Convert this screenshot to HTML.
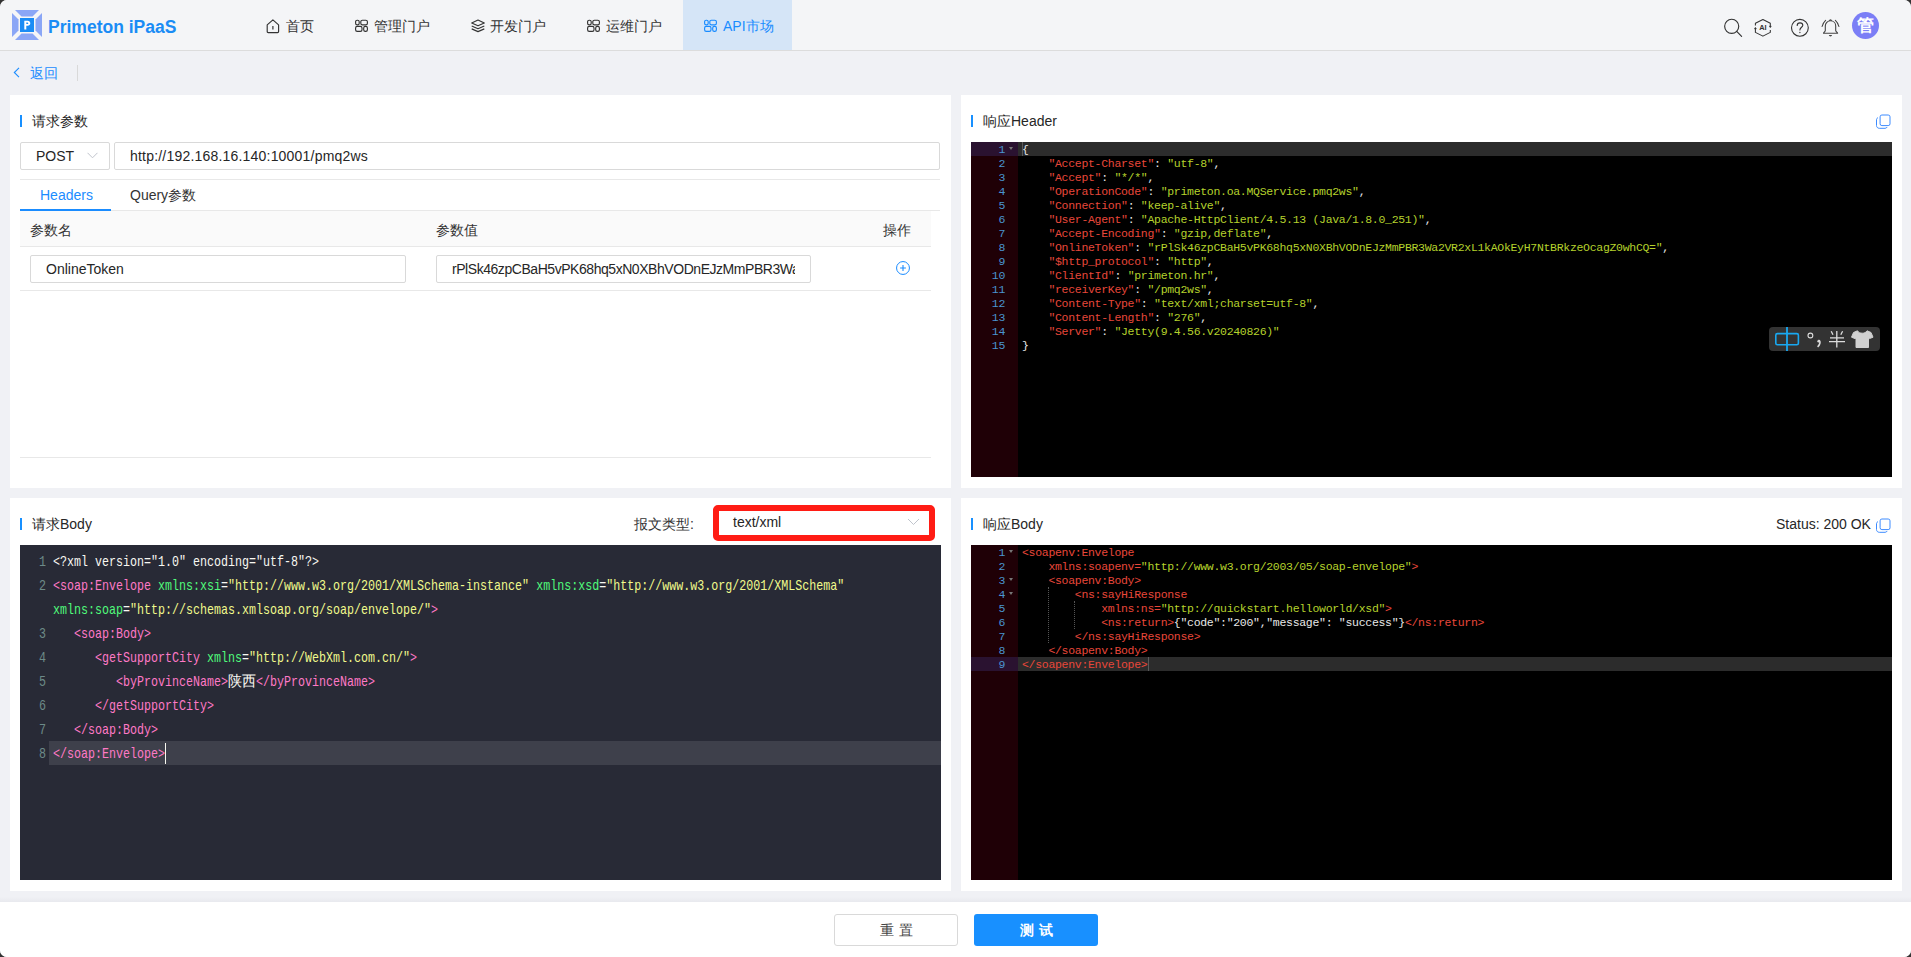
<!DOCTYPE html><html><head><meta charset="utf-8"><style>
*{box-sizing:border-box;margin:0;padding:0}
html,body{width:1911px;height:957px;overflow:hidden;background:#333}
body{font-family:"Liberation Sans",sans-serif;position:relative;color:#262626}
.page{position:absolute;left:0;top:0;width:1911px;height:957px;background:#f0f1f5;border-radius:7px;overflow:hidden}
.abs{position:absolute}
.hdr{position:absolute;left:0;top:0;width:1911px;height:51px;background:#f4f5f7;border-bottom:1px solid #dcdcdc}
.nav{position:absolute;top:0;height:50px;line-height:52px;font-size:14px;color:#333;white-space:nowrap}
.ico svg{display:block}
.panel{position:absolute;background:#fff}
.ttl{position:absolute;font-size:14px;color:#262626;line-height:16px;white-space:nowrap}
.bar{position:absolute;width:2px;height:12px;background:#1890ff}
.inp{position:absolute;border:1px solid #d9d9d9;border-radius:2px;background:#fff;font-size:14px;color:#262626;white-space:nowrap;overflow:hidden}
.mono1{font-family:"Liberation Mono",monospace}
.cm{position:absolute;background:#282a36;overflow:hidden}
.cm .ln{position:absolute;left:0;width:26px;text-align:right;color:#6d8a88;font-family:"Liberation Mono",monospace;font-size:15px;transform:scaleX(0.7778);transform-origin:100% 0}
.cm .row{position:absolute;left:33px;white-space:pre;color:#f8f8f2;font-family:"Liberation Mono",monospace;font-size:15px;height:24px;line-height:24px;transform:scaleX(0.7778);transform-origin:0 0}
.cm .zh{display:inline-block;width:36px;font-size:15px;transform:scaleX(1.2);transform-origin:0 50%;vertical-align:top}
.t{color:#ff79c6}.a{color:#50fa7b}.s{color:#f1fa8c}
.ace{position:absolute;background:#000;overflow:hidden}
.ace .gut{position:absolute;left:0;top:0;bottom:0;width:47px;background:#1f0006}
.ace .ln{position:absolute;left:0;width:34px;text-align:right;color:#4a95cf;font-family:"Liberation Mono",monospace;font-size:11.5px;letter-spacing:-0.3px;height:14px;line-height:14px}
.ace .row{position:absolute;left:51px;white-space:pre;color:#e8e8e8;font-family:"Liberation Mono",monospace;font-size:11.5px;letter-spacing:-0.3px;height:14px;line-height:14px}
.k{color:#e8473a}.v{color:#b5d22c}
.fold{position:absolute;left:38px;width:0;height:0;border-left:2.5px solid transparent;border-right:2.5px solid transparent;border-top:3.5px solid #777}
</style></head><body><div class="page">
<div class="hdr"></div>
<svg class="abs" style="left:12px;top:10px" width="30" height="30" viewBox="0 0 30 30">
<path d="M3 0H27L20.5 6.5H9.5Z" fill="#8aa6f6"/>
<path d="M3 30H27L20.5 23.5H9.5Z" fill="#8aa6f6"/>
<path d="M0 3V27L6.5 20.5V9.5Z" fill="#8aa6f6"/>
<path d="M30 3V27L23.5 20.5V9.5Z" fill="#8aa6f6"/>
<rect x="8" y="8" width="14" height="14" fill="#1a8cf5"/>
<path d="M12.3 19.5V10.8H15.6C17.4 10.8 18.3 11.7 18.3 13.2C18.3 14.7 17.3 15.7 15.6 15.7H14.3V19.5Z M14.3 12.4V14.1H15.3C15.9 14.1 16.3 13.8 16.3 13.25C16.3 12.7 15.9 12.4 15.3 12.4Z" fill="#fff"/>
</svg>
<div class="abs" style="left:48px;top:17px;font-size:17.5px;font-weight:bold;color:#1a8cf5;line-height:20px;white-space:nowrap">Primeton iPaaS</div>
<div class="abs" style="left:683px;top:0;width:109px;height:50px;background:#d5e5f7"></div>
<div class="abs ico" style="left:266px;top:19px;width:14px;height:14px"><svg width="14" height="15" viewBox="0 0 14 15" fill="none" stroke="#333" stroke-width="1.15"><path d="M1.2 5.9L6.9 0.9L12.6 5.9V12.6C12.6 13.2 12.2 13.6 11.6 13.6H2.2C1.6 13.6 1.2 13.2 1.2 12.6Z" stroke-linejoin="round"/><path d="M6.9 7V10.6" stroke-width="1.2"/></svg></div>
<div class="nav" style="left:286px;color:#333">首页</div>
<div class="abs ico" style="left:355px;top:19px;width:14px;height:14px"><svg width="14" height="14" viewBox="0 0 14 14" fill="none" stroke="#333" stroke-width="1.15"><rect x="0.6" y="1.2" width="3.6" height="4.6" rx="1.6"/><rect x="5.8" y="1.2" width="6.6" height="4.6" rx="1.6"/><rect x="0.6" y="7.3" width="6.4" height="5" rx="1.6"/><rect x="8.7" y="7.3" width="3.7" height="5" rx="1.6"/></svg></div>
<div class="nav" style="left:374px;color:#333">管理门户</div>
<div class="abs ico" style="left:471px;top:19px;width:14px;height:14px"><svg width="14" height="14" viewBox="0 0 14 14" fill="none" stroke="#333" stroke-width="1.15"><path d="M7 1.1L13.3 4L7 6.8L0.7 4Z" stroke-linejoin="round"/><path d="M0.7 7L7 9.7L13.3 7" stroke-linejoin="round"/><path d="M0.7 9.9L7 12.6L13.3 9.9" stroke-linejoin="round"/></svg></div>
<div class="nav" style="left:490px;color:#333">开发门户</div>
<div class="abs ico" style="left:587px;top:19px;width:14px;height:14px"><svg width="14" height="14" viewBox="0 0 14 14" fill="none" stroke="#333" stroke-width="1.15"><rect x="0.6" y="1.2" width="3.6" height="4.6" rx="1.6"/><rect x="5.8" y="1.2" width="6.6" height="4.6" rx="1.6"/><rect x="0.6" y="7.3" width="6.4" height="5" rx="1.6"/><rect x="8.7" y="7.3" width="3.7" height="5" rx="1.6"/></svg></div>
<div class="nav" style="left:606px;color:#333">运维门户</div>
<div class="abs ico" style="left:704px;top:19px;width:14px;height:14px"><svg width="14" height="14" viewBox="0 0 14 14" fill="none" stroke="#1a8cff" stroke-width="1.15"><rect x="0.6" y="1.2" width="3.6" height="4.6" rx="1.6"/><rect x="5.8" y="1.2" width="6.6" height="4.6" rx="1.6"/><rect x="0.6" y="7.3" width="6.4" height="5" rx="1.6"/><rect x="8.7" y="7.3" width="3.7" height="5" rx="1.6"/></svg></div>
<div class="nav" style="left:723px;color:#1a8cff">API市场</div>
<svg class="abs" style="left:1722px;top:17px" width="22" height="22" viewBox="0 0 22 22" fill="none" stroke="#333" stroke-width="1.15">
<circle cx="9.7" cy="9.3" r="7.05"/><path d="M14.7 14.4L19.6 19.4" stroke-linecap="round"/></svg>
<svg class="abs" style="left:1753px;top:18px" width="20" height="20" viewBox="0 0 20 20" fill="none" stroke="#333" stroke-width="1.05">
<path d="M17.3 8.3V5.2L9.9 1.55L2.4 5.2V7.5" stroke-linejoin="round"/><path d="M2.4 10.7V14.4L9.9 18.1L17.3 14.4V12.1" stroke-linejoin="round"/>
<path d="M16.3 8.1L17.3 9.7L18.3 8.1Z" fill="#333" stroke-width="0.5"/><path d="M1.4 10.9L2.4 9.3L3.4 10.9Z" fill="#333" stroke-width="0.5"/>
<text x="9.9" y="12.1" font-family="Liberation Sans" font-size="7.4" font-weight="bold" fill="#333" stroke="none" text-anchor="middle">AI</text></svg>
<svg class="abs" style="left:1790px;top:18px" width="20" height="20" viewBox="0 0 20 20" fill="none" stroke="#333" stroke-width="1.1">
<circle cx="9.9" cy="9.8" r="8.4"/><path d="M7.2 7.4C7.2 5.9 8.4 4.9 10 4.9C11.6 4.9 12.8 5.9 12.8 7.3C12.8 9.1 9.9 9.6 9.9 12" stroke-linecap="round"/><circle cx="9.9" cy="14.5" r="0.65" fill="#333" stroke="none"/></svg>
<svg class="abs" style="left:1821px;top:18px" width="20" height="20" viewBox="0 0 20 20" fill="none" stroke="#444" stroke-width="1.1">
<path d="M2.5 15.2C2.5 14.4 4.3 13.6 4.3 12.4V8C4.3 5 6.6 2.8 9.5 2.8C12.4 2.8 14.7 5 14.7 8V12.4C14.7 13.6 16.6 14.4 16.6 15.2Z" stroke-linejoin="round"/>
<path d="M8.6 2.9C8.6 1.4 10.4 1.4 10.4 2.9" />
<path d="M7.9 17H11C11 18.9 7.9 18.9 7.9 17Z" fill="#444" stroke="none"/>
<path d="M4.6 2.3C3 3.8 1.6 6 1.1 8.5M14.4 2.3C16 3.8 17.4 6 17.9 8.5" stroke-linecap="round"/></svg>
<div class="abs" style="left:1852px;top:12px;width:27px;height:27px;border-radius:50%;background:#7b7ef6;color:#fff;font-size:17px;font-weight:bold;line-height:27px;text-align:center">管</div>
<svg class="abs" style="left:13px;top:67px" width="7" height="11" viewBox="0 0 7 11" fill="none" stroke="#1a8cff" stroke-width="1.1"><path d="M6 0.8L1.3 5.5L6 10.2"/></svg>
<div class="abs" style="left:30px;top:64px;font-size:14px;line-height:18px;color:#1a8cff">返回</div>
<div class="abs" style="left:77px;top:65px;width:1px;height:16px;background:#d9d9d9"></div>
<div class="panel" style="left:10px;top:95px;width:941px;height:393px"></div>
<div class="panel" style="left:961px;top:95px;width:941px;height:393px"></div>
<div class="panel" style="left:10px;top:498px;width:941px;height:393px"></div>
<div class="panel" style="left:961px;top:498px;width:941px;height:393px"></div>
<div class="bar" style="left:20px;top:115px"></div>
<div class="ttl" style="left:32px;top:113px">请求参数</div>
<div class="bar" style="left:971px;top:115px"></div>
<div class="ttl" style="left:983px;top:113px">响应Header</div>
<div class="bar" style="left:20px;top:518px"></div>
<div class="ttl" style="left:32px;top:516px">请求Body</div>
<div class="bar" style="left:971px;top:518px"></div>
<div class="ttl" style="left:983px;top:516px">响应Body</div>
<div class="inp" style="left:20px;top:142px;width:90px;height:28px;line-height:26px;padding-left:15px">POST</div>
<svg class="abs" style="left:87px;top:152px" width="11" height="7" viewBox="0 0 11 7" fill="none" stroke="#c0c4cc" stroke-width="1"><path d="M0.5 0.8L5.5 5.8L10.5 0.8"/></svg>
<div class="inp" style="left:114px;top:142px;width:826px;height:28px;line-height:26px;padding-left:15px;letter-spacing:0.2px">http://192.168.16.140:10001/pmq2ws</div>
<div class="abs" style="left:20px;top:179px;width:920px;height:1px;background:#e8e8e8"></div>
<div class="abs" style="left:40px;top:186px;font-size:14px;line-height:18px;color:#1a8cff">Headers</div>
<div class="abs" style="left:130px;top:186px;font-size:14px;line-height:18px;color:#333">Query参数</div>
<div class="abs" style="left:20px;top:210px;width:920px;height:1px;background:#e8e8e8"></div>
<div class="abs" style="left:20px;top:209px;width:91px;height:2px;background:#1a8cff"></div>
<div class="abs" style="left:20px;top:211px;width:911px;height:36px;background:#fafafa;border-bottom:1px solid #e8e8e8"></div>
<div class="abs" style="left:30px;top:221px;font-size:14px;line-height:18px;color:#333">参数名</div>
<div class="abs" style="left:436px;top:221px;font-size:14px;line-height:18px;color:#333">参数值</div>
<div class="abs" style="left:883px;top:221px;font-size:14px;line-height:18px;color:#333">操作</div>
<div class="inp" style="left:30px;top:255px;width:376px;height:28px;line-height:26px;padding-left:15px">OnlineToken</div>
<div class="inp" style="left:436px;top:255px;width:375px;height:28px;line-height:26px;padding-left:15px;padding-right:15px;text-overflow:clip"><div style="width:343px;overflow:hidden;letter-spacing:-0.45px">rPlSk46zpCBaH5vPK68hq5xN0XBhVODnEJzMmPBR3Wa2VR2xL1kAOkEyH7NtBRkzeOcagZ0whCQ=</div></div>
<svg class="abs" style="left:895px;top:261px" width="16" height="15" viewBox="0 0 16 15" fill="none" stroke="#1a8cff" stroke-width="1"><circle cx="8" cy="7" r="6.45"/><path d="M8 4.1V9.9M5.1 7H10.9" stroke-width="1.1"/></svg>
<div class="abs" style="left:20px;top:290px;width:911px;height:1px;background:#e8e8e8"></div>
<div class="abs" style="left:20px;top:457px;width:911px;height:1px;background:#e8e8e8"></div>
<div class="abs" style="left:634px;top:515px;font-size:14px;line-height:18px;color:#333">报文类型:</div>
<div class="abs" style="left:713px;top:505px;width:222px;height:36px;border:6px solid #ff1c14;border-radius:5px;background:#fff"></div>
<div class="abs" style="left:733px;top:513px;font-size:14px;line-height:18px;color:#262626">text/xml</div>
<svg class="abs" style="left:907px;top:518px" width="13" height="8" viewBox="0 0 13 8" fill="none" stroke="#c0c4cc" stroke-width="1"><path d="M1 1L6.5 6.5L12 1"/></svg>
<div class="cm" style="left:20px;top:545px;width:921px;height:335px">
<div class="abs" style="left:29px;top:196px;width:892px;height:24px;background:#3e404b"></div>
<div class="ln" style="top:6px;height:24px;line-height:24px">1</div>
<div class="row" style="top:6px">&lt;?xml version=&quot;1.0&quot; encoding=&quot;utf-8&quot;?&gt;</div>
<div class="ln" style="top:30px;height:24px;line-height:24px">2</div>
<div class="row" style="top:30px"><span class="t">&lt;soap:Envelope</span> <span class="a">xmlns:xsi</span>=<span class="s">&quot;http://www.w3.org/2001/XMLSchema-instance&quot;</span> <span class="a">xmlns:xsd</span>=<span class="s">&quot;http://www.w3.org/2001/XMLSchema&quot;</span></div>
<div class="row" style="top:54px"><span class="a">xmlns:soap</span>=<span class="s">&quot;http://schemas.xmlsoap.org/soap/envelope/&quot;</span><span class="t">&gt;</span></div>
<div class="ln" style="top:78px;height:24px;line-height:24px">3</div>
<div class="row" style="top:78px">   <span class="t">&lt;soap:Body&gt;</span></div>
<div class="ln" style="top:102px;height:24px;line-height:24px">4</div>
<div class="row" style="top:102px">      <span class="t">&lt;getSupportCity</span> <span class="a">xmlns</span>=<span class="s">&quot;http://WebXml.com.cn/&quot;</span><span class="t">&gt;</span></div>
<div class="ln" style="top:126px;height:24px;line-height:24px">5</div>
<div class="row" style="top:126px">         <span class="t">&lt;byProvinceName&gt;</span><span class="zh">陕西</span><span class="t">&lt;/byProvinceName&gt;</span></div>
<div class="ln" style="top:150px;height:24px;line-height:24px">6</div>
<div class="row" style="top:150px">      <span class="t">&lt;/getSupportCity&gt;</span></div>
<div class="ln" style="top:174px;height:24px;line-height:24px">7</div>
<div class="row" style="top:174px">   <span class="t">&lt;/soap:Body&gt;</span></div>
<div class="ln" style="top:198px;height:24px;line-height:24px">8</div>
<div class="row" style="top:198px"><span class="t">&lt;/soap:Envelope&gt;</span></div>
<div class="abs" style="left:145px;top:198px;width:1px;height:21px;background:#f8f8f0"></div>
</div>
<div class="ace" style="left:971px;top:142px;width:921px;height:335px">
<div class="gut"></div>
<div class="abs" style="left:0;top:0px;width:47px;height:14px;background:#2a1230"></div>
<div class="abs" style="left:47px;top:0px;width:874px;height:14px;background:#2c2c2c"></div>
<div class="ln" style="top:1px">1</div>
<div class="fold" style="top:5px"></div>
<div class="row" style="top:1px">{</div>
<div class="ln" style="top:15px">2</div>
<div class="row" style="top:15px">    <span class="k">&quot;Accept-Charset&quot;</span>: <span class="v">&quot;utf-8&quot;</span>,</div>
<div class="ln" style="top:29px">3</div>
<div class="row" style="top:29px">    <span class="k">&quot;Accept&quot;</span>: <span class="v">&quot;*/*&quot;</span>,</div>
<div class="ln" style="top:43px">4</div>
<div class="row" style="top:43px">    <span class="k">&quot;OperationCode&quot;</span>: <span class="v">&quot;primeton.oa.MQService.pmq2ws&quot;</span>,</div>
<div class="ln" style="top:57px">5</div>
<div class="row" style="top:57px">    <span class="k">&quot;Connection&quot;</span>: <span class="v">&quot;keep-alive&quot;</span>,</div>
<div class="ln" style="top:71px">6</div>
<div class="row" style="top:71px">    <span class="k">&quot;User-Agent&quot;</span>: <span class="v">&quot;Apache-HttpClient/4.5.13 (Java/1.8.0_251)&quot;</span>,</div>
<div class="ln" style="top:85px">7</div>
<div class="row" style="top:85px">    <span class="k">&quot;Accept-Encoding&quot;</span>: <span class="v">&quot;gzip,deflate&quot;</span>,</div>
<div class="ln" style="top:99px">8</div>
<div class="row" style="top:99px">    <span class="k">&quot;OnlineToken&quot;</span>: <span class="v">&quot;rPlSk46zpCBaH5vPK68hq5xN0XBhVODnEJzMmPBR3Wa2VR2xL1kAOkEyH7NtBRkzeOcagZ0whCQ=&quot;</span>,</div>
<div class="ln" style="top:113px">9</div>
<div class="row" style="top:113px">    <span class="k">&quot;$http_protocol&quot;</span>: <span class="v">&quot;http&quot;</span>,</div>
<div class="ln" style="top:127px">10</div>
<div class="row" style="top:127px">    <span class="k">&quot;ClientId&quot;</span>: <span class="v">&quot;primeton.hr&quot;</span>,</div>
<div class="ln" style="top:141px">11</div>
<div class="row" style="top:141px">    <span class="k">&quot;receiverKey&quot;</span>: <span class="v">&quot;/pmq2ws&quot;</span>,</div>
<div class="ln" style="top:155px">12</div>
<div class="row" style="top:155px">    <span class="k">&quot;Content-Type&quot;</span>: <span class="v">&quot;text/xml;charset=utf-8&quot;</span>,</div>
<div class="ln" style="top:169px">13</div>
<div class="row" style="top:169px">    <span class="k">&quot;Content-Length&quot;</span>: <span class="v">&quot;276&quot;</span>,</div>
<div class="ln" style="top:183px">14</div>
<div class="row" style="top:183px">    <span class="k">&quot;Server&quot;</span>: <span class="v">&quot;Jetty(9.4.56.v20240826)&quot;</span></div>
<div class="ln" style="top:197px">15</div>
<div class="row" style="top:197px">}</div>
<div class="abs" style="left:51px;top:0px;width:1px;height:14px;background:#5a5a5a"></div>
</div>
<div class="ace" style="left:971px;top:545px;width:921px;height:335px">
<div class="gut"></div>
<div class="abs" style="left:0;top:112px;width:47px;height:14px;background:#2a1230"></div>
<div class="abs" style="left:47px;top:112px;width:874px;height:14px;background:#2c2c2c"></div>
<div class="abs" style="left:77px;top:42px;height:56px;width:0;border-left:1px dotted #555"></div>
<div class="abs" style="left:103px;top:56px;height:28px;width:0;border-left:1px dotted #555"></div>
<div class="ln" style="top:1px">1</div>
<div class="fold" style="top:5px"></div>
<div class="row" style="top:1px"><span class="k">&lt;soapenv:Envelope</span></div>
<div class="ln" style="top:15px">2</div>
<div class="row" style="top:15px">    <span class="k">xmlns:soapenv=</span><span class="v">&quot;http://www.w3.org/2003/05/soap-envelope&quot;</span><span class="k">&gt;</span></div>
<div class="ln" style="top:29px">3</div>
<div class="fold" style="top:33px"></div>
<div class="row" style="top:29px">    <span class="k">&lt;soapenv:Body&gt;</span></div>
<div class="ln" style="top:43px">4</div>
<div class="fold" style="top:47px"></div>
<div class="row" style="top:43px">        <span class="k">&lt;ns:sayHiResponse</span></div>
<div class="ln" style="top:57px">5</div>
<div class="row" style="top:57px">            <span class="k">xmlns:ns=</span><span class="v">&quot;http://quickstart.helloworld/xsd&quot;</span><span class="k">&gt;</span></div>
<div class="ln" style="top:71px">6</div>
<div class="row" style="top:71px">            <span class="k">&lt;ns:return&gt;</span>{&quot;code&quot;:&quot;200&quot;,&quot;message&quot;: &quot;success&quot;}<span class="k">&lt;/ns:return&gt;</span></div>
<div class="ln" style="top:85px">7</div>
<div class="row" style="top:85px">        <span class="k">&lt;/ns:sayHiResponse&gt;</span></div>
<div class="ln" style="top:99px">8</div>
<div class="row" style="top:99px">    <span class="k">&lt;/soapenv:Body&gt;</span></div>
<div class="ln" style="top:113px">9</div>
<div class="row" style="top:113px"><span class="k">&lt;/soapenv:Envelope&gt;</span></div>
<div class="abs" style="left:177px;top:112px;width:1px;height:14px;background:#5a5a5a"></div>
</div>
<svg class="abs" style="left:1876px;top:114px" width="15" height="15" viewBox="0 0 15 15" fill="none" stroke="#3d8bff" stroke-width="1"><rect x="4.1" y="1" width="9.9" height="10.6" rx="1.8"/><path d="M1.9 3.6C1.1 4 0.5 4.8 0.5 5.7V11.5C0.5 13.1 1.7 14.3 3.3 14.3H9.1C10 14.3 10.8 13.8 11.2 13"/></svg>
<svg class="abs" style="left:1876px;top:518px" width="15" height="15" viewBox="0 0 15 15" fill="none" stroke="#3d8bff" stroke-width="1"><rect x="4.1" y="1" width="9.9" height="10.6" rx="1.8"/><path d="M1.9 3.6C1.1 4 0.5 4.8 0.5 5.7V11.5C0.5 13.1 1.7 14.3 3.3 14.3H9.1C10 14.3 10.8 13.8 11.2 13"/></svg>
<div class="abs" style="left:1776px;top:516px;font-size:14px;line-height:16px;color:#262626">Status: 200 OK</div>
<div class="abs" style="left:1769px;top:327px;width:111px;height:24px;background:#333;border-radius:4px"></div>
<svg class="abs" style="left:1769px;top:327px" width="111" height="24" viewBox="0 0 111 24">
<rect x="6.8" y="6.6" width="22.6" height="11.2" rx="1.6" fill="none" stroke="#19a8f0" stroke-width="1.6"/><path d="M18 0V24" stroke="#19a8f0" stroke-width="1.8"/>
<circle cx="41.4" cy="8.5" r="2.4" fill="none" stroke="#ddd" stroke-width="1.1"/>
<path d="M49.6 13.2C50.8 13.2 51.2 15 50.8 16.5C50.4 18 49.6 19 48.6 19.8" stroke="#ddd" stroke-width="1.6" fill="none"/><circle cx="49.6" cy="14.2" r="1.2" fill="#ddd"/>
<path d="M62.2 4.2L64 7.8M73.6 4.2L71.8 7.8M61 10.8H75M60 14.7H76M67.8 4V20.5" stroke="#ddd" stroke-width="1.3" fill="none"/>
<path d="M84.5 5.5L88.5 3.8C89.5 5.6 91.3 6.2 93.3 6.2C95.3 6.2 97 5.6 98 3.8L102 5.5L104 10.2L100.5 11.6L99.5 11V20.5H87V11L86 11.6L82.5 10.2Z" fill="#d0d0d0" stroke="#d0d0d0" stroke-width="1" stroke-linejoin="round"/>
</svg>
<div class="abs" style="left:0;top:897px;width:1911px;height:5px;background:linear-gradient(#f0f1f5,#e8e9ee)"></div>
<div class="abs" style="left:0;top:902px;width:1911px;height:55px;background:#fff"></div>
<div class="abs" style="left:834px;top:914px;width:124px;height:32px;border:1px solid #d9d9d9;border-radius:3px;background:#fff;font-size:14px;line-height:30px;text-align:center;color:#444;letter-spacing:5px;padding-left:5px">重置</div>
<div class="abs" style="left:974px;top:914px;width:124px;height:32px;border-radius:3px;background:#1890ff;font-size:14px;line-height:32px;text-align:center;color:#fff;font-weight:bold;letter-spacing:5px;padding-left:5px">测试</div>
</div></body></html>
